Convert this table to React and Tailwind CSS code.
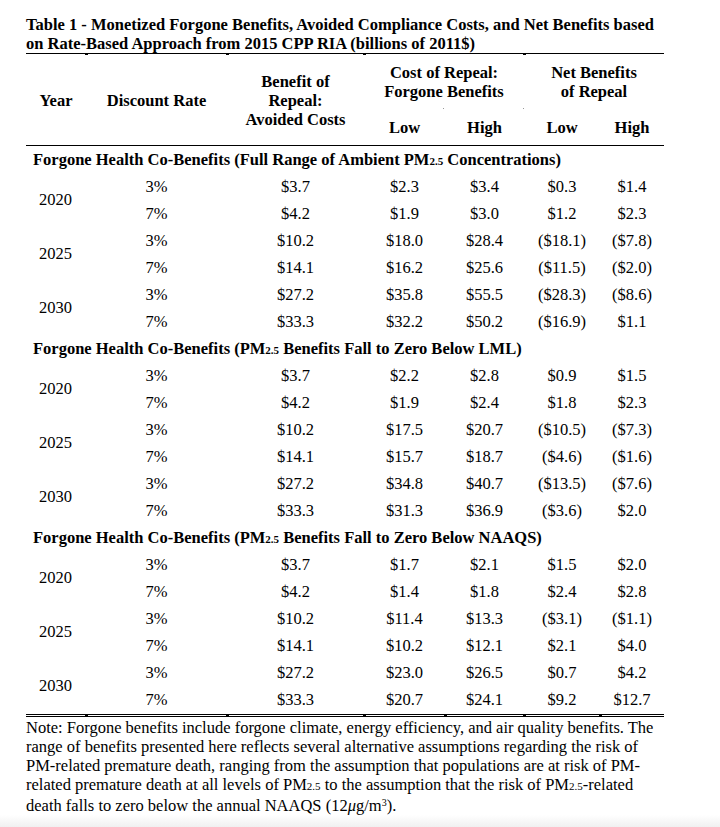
import React from "react";

const cols = "grid-cols-[60px_141px_137px_81px_79px_76px_64px]";

const sections = [
  {
    title: (
      <>
        Forgone Health Co-Benefits (Full Range of Ambient PM<span className="text-[11px]">2.5</span> Concentrations)
      </>
    ),
    years: [
      ["2020", ["3%", "$3.7", "$2.3", "$3.4", "$0.3", "$1.4"], ["7%", "$4.2", "$1.9", "$3.0", "$1.2", "$2.3"]],
      ["2025", ["3%", "$10.2", "$18.0", "$28.4", "($18.1)", "($7.8)"], ["7%", "$14.1", "$16.2", "$25.6", "($11.5)", "($2.0)"]],
      ["2030", ["3%", "$27.2", "$35.8", "$55.5", "($28.3)", "($8.6)"], ["7%", "$33.3", "$32.2", "$50.2", "($16.9)", "$1.1"]],
    ],
  },
  {
    title: (
      <>
        Forgone Health Co-Benefits (PM<span className="text-[11px]">2.5</span> Benefits Fall to Zero Below LML)
      </>
    ),
    years: [
      ["2020", ["3%", "$3.7", "$2.2", "$2.8", "$0.9", "$1.5"], ["7%", "$4.2", "$1.9", "$2.4", "$1.8", "$2.3"]],
      ["2025", ["3%", "$10.2", "$17.5", "$20.7", "($10.5)", "($7.3)"], ["7%", "$14.1", "$15.7", "$18.7", "($4.6)", "($1.6)"]],
      ["2030", ["3%", "$27.2", "$34.8", "$40.7", "($13.5)", "($7.6)"], ["7%", "$33.3", "$31.3", "$36.9", "($3.6)", "$2.0"]],
    ],
  },
  {
    title: (
      <>
        Forgone Health Co-Benefits (PM<span className="text-[11px]">2.5</span> Benefits Fall to Zero Below NAAQS)
      </>
    ),
    years: [
      ["2020", ["3%", "$3.7", "$1.7", "$2.1", "$1.5", "$2.0"], ["7%", "$4.2", "$1.4", "$1.8", "$2.4", "$2.8"]],
      ["2025", ["3%", "$10.2", "$11.4", "$13.3", "($3.1)", "($1.1)"], ["7%", "$14.1", "$10.2", "$12.1", "$2.1", "$4.0"]],
      ["2030", ["3%", "$27.2", "$23.0", "$26.5", "$0.7", "$4.2"], ["7%", "$33.3", "$20.7", "$24.1", "$9.2", "$12.7"]],
    ],
  },
];

// little column marks left over from the word table
function Tick({ left, top }) {
  return <span className="absolute h-[2px] w-[3px] bg-black" style={{ left, top }} />;
}

export default function App() {
  return (
    <div className="flex min-h-[827px] w-[720px] flex-col bg-white font-['Liberation_Serif','Times_New_Roman',serif] text-[16.5px] text-black">
      <div className="w-[664px] pl-[26px] pt-[15px]">
        {/* title */}
        <div className="relative border-b border-black font-bold leading-[19px]">
          <div className="whitespace-nowrap">
            Table 1 - Monetized Forgone Benefits, Avoided Compliance Costs, and Net Benefits based
          </div>
          <div className="whitespace-nowrap">on Rate-Based Approach from 2015 CPP RIA (billions of 2011$)</div>
          <Tick left={59} top={38} />
          <Tick left={200} top={38} />
          <Tick left={337} top={38} />
          <Tick left={497} top={38} />
        </div>

        {/* column headers */}
        <div className={`relative grid h-[92px] ${cols} grid-rows-[64px_27px] border-b border-black font-bold leading-[19px]`}>
          <div className="row-span-2 flex items-center justify-center pt-[2px]">Year</div>
          <div className="row-span-2 flex items-center justify-center pt-[2px]">Discount Rate</div>
          <div className="row-span-2 flex items-center justify-center pt-[2px] text-center">
            Benefit of
            <br />
            Repeal:
            <br />
            Avoided Costs
          </div>
          <div className="col-span-2 pt-[9px] text-center">
            Cost of Repeal:
            <br />
            Forgone Benefits
          </div>
          <div className="col-span-2 pt-[9px] text-center">
            Net Benefits
            <br />
            of Repeal
          </div>
          <div className="text-center">Low</div>
          <div className="text-center">High</div>
          <div className="text-center">Low</div>
          <div className="text-center">High</div>
          <span className="absolute left-[417px] top-[54px] h-px w-px bg-[#999]" />
          <span className="absolute left-[497px] top-[54px] h-px w-px bg-[#999]" />
        </div>

        {/* body */}
        <div className={`relative grid ${cols} auto-rows-[27px] border-b-[3px] border-double border-black pb-[1px] leading-[27px]`}>
          {sections.map((s, i) => (
            <React.Fragment key={i}>
              <div className="col-span-7 whitespace-nowrap pl-[7px] font-bold">{s.title}</div>
              {s.years.map(([year, a, b]) => (
                <React.Fragment key={year}>
                  <div className="row-span-2 pl-[13px] leading-[54px]">{year}</div>
                  {a.map((v, j) => (
                    <div key={"a" + j} className="text-center">
                      {v}
                    </div>
                  ))}
                  {b.map((v, j) => (
                    <div key={"b" + j} className="text-center">
                      {v}
                    </div>
                  ))}
                </React.Fragment>
              ))}
            </React.Fragment>
          ))}
          <Tick left={59} top={569} />
          <Tick left={200} top={569} />
          <Tick left={337} top={569} />
          <Tick left={418} top={569} />
          <Tick left={497} top={569} />
          <Tick left={573} top={569} />
        </div>

        {/* note */}
        <div className="pt-[1px] leading-[19px]">
          <div className="whitespace-nowrap">
            Note: Forgone benefits include forgone climate, energy efficiency, and air quality benefits. The
          </div>
          <div className="whitespace-nowrap">
            range of benefits presented here reflects several alternative assumptions regarding the risk of
          </div>
          <div className="whitespace-nowrap">
            PM-related premature death, ranging from the assumption that populations are at risk of PM-
          </div>
          <div className="whitespace-nowrap">
            related premature death at all levels of PM<span className="text-[11px]">2.5</span> to the assumption that
            the risk of PM<span className="text-[11px]">2.5</span>-related
          </div>
          <div className="whitespace-nowrap">
            death falls to zero below the annual NAAQS (12<i>μ</i>g/m<sup className="text-[10px]">3</sup>).
          </div>
        </div>
      </div>
      <div className="min-h-[12px] flex-1 bg-linear-to-b from-white to-[#f0f0f0]" />
    </div>
  );
}
